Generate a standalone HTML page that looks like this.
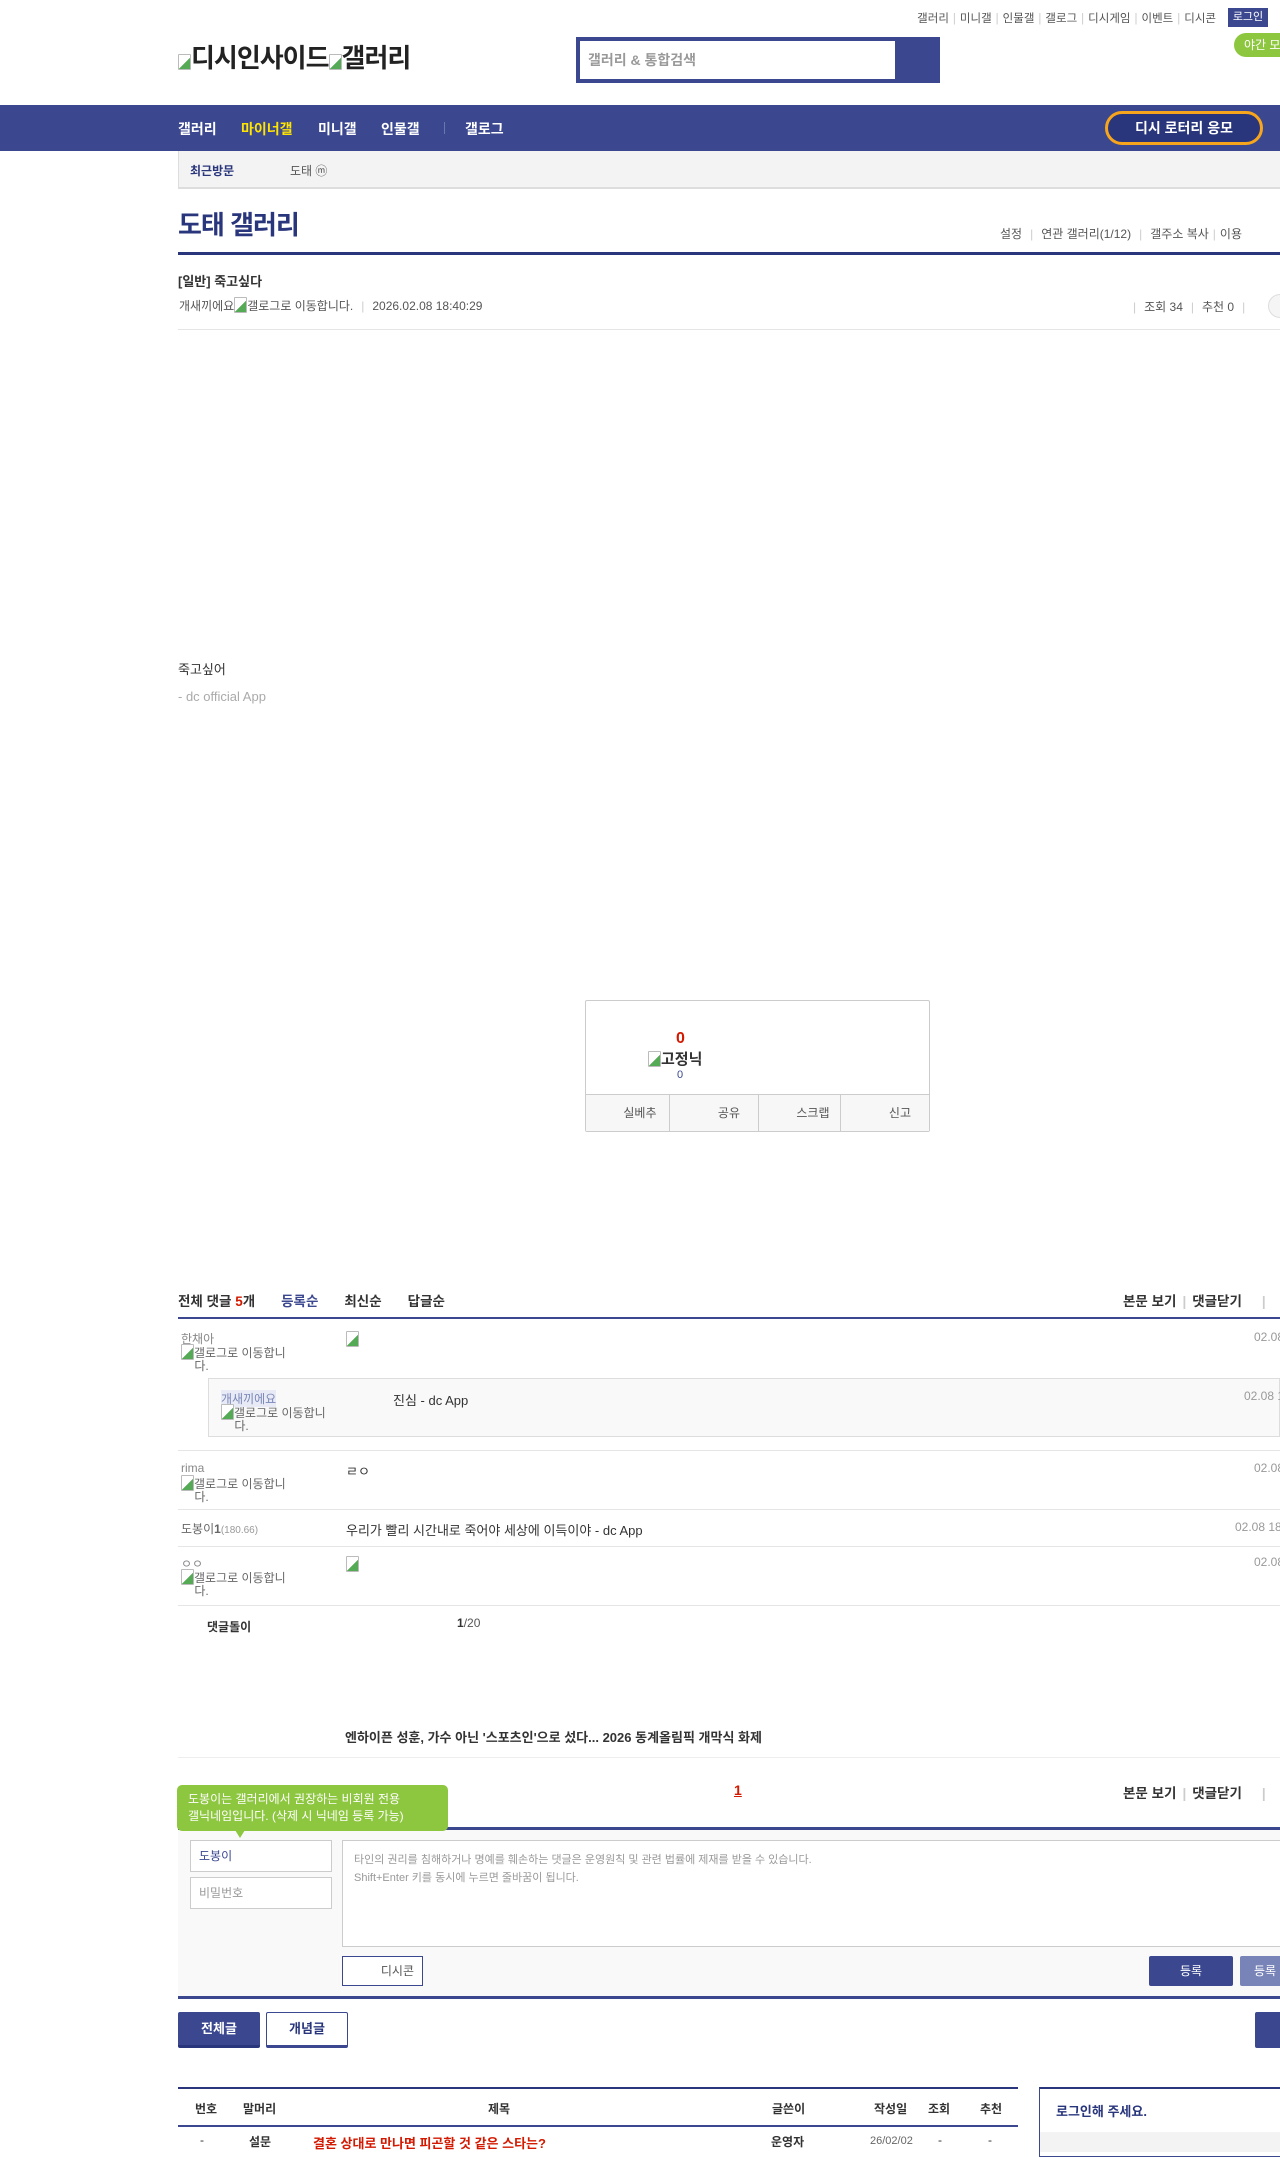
<!DOCTYPE html>
<html><head><meta charset="utf-8">
<style>
*{margin:0;padding:0;box-sizing:border-box}
body{width:1280px;height:2144px;overflow:hidden;position:relative;background:#fff;font-family:"Liberation Sans","Noto Sans CJK KR",sans-serif;color:#333;font-size:12px}
.a{position:absolute;white-space:nowrap}
.sep{color:#ccc;margin:0 4px}
.line{position:absolute;height:1px;background:#e5e5e5}
.img{display:inline-block;width:13px;height:16px;border:1px solid #bbb;border-radius:1px;vertical-align:-3px;background:linear-gradient(135deg,#fff 55%,#5a5 56%)}
.cm{font-size:12px;color:#888}
</style></head><body>
<div class="a" style="left:903px;top:10px;font-size:11.5px;color:#555;width:313px;text-align:right">갤러리<span class="sep">|</span>미니갤<span class="sep">|</span>인물갤<span class="sep">|</span>갤로그<span class="sep">|</span>디시게임<span class="sep">|</span>이벤트<span class="sep">|</span>디시콘</div>
<div class="a" style="left:1228px;top:8px;width:40px;height:19px;background:#3b4890;color:#fff;font-size:11px;text-align:center;line-height:19px">로그인</div>
<div class="a" style="left:1234px;top:33px;width:60px;height:24px;background:#8dc63f;border-radius:12px;color:#fff;font-size:12px;line-height:24px;padding-left:10px">야간 모드</div>
<div class="a" style="left:178px;top:38px;font-size:26px;font-weight:bold;color:#222;letter-spacing:-1px"><span class="img"></span>디시인사이드<span class="img"></span>갤러리</div>
<div class="a" style="left:576px;top:37px;width:364px;height:46px;background:#3b4890"></div>
<div class="a" style="left:580px;top:41px;width:315px;height:38px;background:#fff;color:#999;font-size:14px;font-weight:bold;line-height:38px;padding-left:8px">갤러리 &amp; 통합검색</div>
<div class="a" style="left:0;top:105px;width:1280px;height:46px;background:#3b4890"></div>
<div class="a" style="left:178px;top:119px;font-size:14px;font-weight:bold;color:#fff">갤러리</div>
<div class="a" style="left:241px;top:119px;font-size:14px;font-weight:bold;color:#ffe400">마이너갤</div>
<div class="a" style="left:318px;top:119px;font-size:14px;font-weight:bold;color:#fff">미니갤</div>
<div class="a" style="left:381px;top:119px;font-size:14px;font-weight:bold;color:#fff">인물갤</div>
<div class="a" style="left:444px;top:122px;width:1px;height:12px;background:#6a76b0"></div>
<div class="a" style="left:465px;top:119px;font-size:14px;font-weight:bold;color:#fff">갤로그</div>
<div class="a" style="left:1105px;top:111px;width:158px;height:34px;border:3px solid #f7a51c;border-radius:17px;background:#29367c;color:#fff;font-size:14px;font-weight:bold;text-align:center;line-height:28px">디시 로터리 응모</div>
<div class="a" style="left:178px;top:151px;width:1102px;height:38px;background:#f3f3f3;border-left:1px solid #ddd;border-bottom:2px solid #ddd"></div>
<div class="a" style="left:190px;top:162px;font-size:12px;font-weight:bold;color:#29367c">최근방문</div>
<div class="a" style="left:290px;top:162px;font-size:12px;color:#555">도태 ⓜ</div>
<div class="a" style="left:178px;top:205px;font-size:26px;font-weight:bold;color:#29367c;letter-spacing:-1px">도태 갤러리</div>
<div class="a" style="left:1000px;top:225px;font-size:12px;color:#555">설정<span class="sep" style="margin:0 8px">|</span>연관 갤러리(1/12)<span class="sep" style="margin:0 8px">|</span>갤주소 복사<span class="sep">|</span>이용</div>
<div class="a" style="left:178px;top:252px;width:1102px;height:3px;background:#29367c"></div>
<div class="a" style="left:178px;top:271px;font-size:13px;font-weight:bold;color:#333">[일반] 죽고싶다</div>
<div class="a" style="left:179px;top:297px;font-size:12px;color:#555">개새끼에요<span class="img"></span>갤로그로 이동합니다.<span class="sep" style="margin:0 8px">|</span>2026.02.08 18:40:29</div>
<div class="a" style="left:1133px;top:298px;font-size:12px;color:#555"><span class="sep" style="margin:0 8px 0 0">|</span>조회 34<span class="sep" style="margin:0 8px">|</span>추천 0<span class="sep" style="margin:0 8px">|</span></div>
<div class="a" style="left:1268px;top:294px;width:24px;height:24px;border:1px solid #ddd;border-radius:12px;background:#f5f5f5"></div>
<div class="line" style="left:178px;top:329px;width:1102px"></div>
<div class="a" style="left:178px;top:659px;font-size:13px;color:#333">죽고싶어</div>
<div class="a" style="left:178px;top:689px;font-size:13px;color:#aaa">- dc official App</div>
<div class="a" style="left:585px;top:1000px;width:345px;height:132px;border:1px solid #ccc;border-radius:2px"></div>
<div class="a" style="left:676px;top:1030px;font-size:16px;font-weight:bold;color:#d31900">0</div>
<div class="a" style="left:648px;top:1048px;font-size:15px;font-weight:bold;color:#333"><span class="img"></span>고정닉</div>
<div class="a" style="left:677px;top:1069px;font-size:11px;color:#3b4890">0</div>
<div class="a" style="left:586px;top:1094px;width:343px;height:37px;background:#f7f7f7;border-top:1px solid #ccc;display:flex">
<div style="flex:1;border-right:1px solid #ccc;text-align:right;padding-right:12px;line-height:36px;color:#555">실베추</div>
<div style="flex:1;border-right:1px solid #ccc;text-align:right;padding-right:18px;line-height:36px;color:#555">공유</div>
<div style="flex:1;border-right:1px solid #ccc;text-align:right;padding-right:10px;line-height:36px;color:#555">스크랩</div>
<div style="flex:1;text-align:right;padding-right:18px;line-height:36px;color:#555">신고</div></div>
<div class="a" style="left:178px;top:1290px;font-size:13.5px;font-weight:bold;color:#333">전체 댓글 <span style="color:#d31900">5</span>개<span style="color:#3b4890;margin-left:26px">등록순</span><span style="margin-left:26px">최신순</span><span style="margin-left:26px">답글순</span></div>
<div class="a" style="left:1123px;top:1290px;font-size:13.5px;font-weight:bold;color:#333">본문 보기<span class="sep" style="margin:0 6px">|</span>댓글닫기<span class="sep" style="margin:0 0 0 20px">|</span></div>
<div class="a" style="left:178px;top:1317px;width:1102px;height:2px;background:#3b4890"></div>
<div class="a cm" style="left:181px;top:1330px">한채아</div>
<div class="a cm" style="left:181px;top:1344px;line-height:12px;color:#666"><span class="img"></span>갤로그로 이동합니<br>&nbsp;&nbsp;&nbsp;&nbsp;다.</div>
<div class="a" style="left:346px;top:1331px"><span class="img"></span></div>
<div class="a cm" style="left:1254px;top:1330px;color:#999">02.08</div>
<div class="a" style="left:208px;top:1378px;width:1072px;height:59px;background:#f9f9f9;border:1px solid #ddd"></div>
<div class="a cm" style="left:221px;top:1390px;background:#e8ebf5;color:#7a86b8">개새끼에요</div>
<div class="a cm" style="left:221px;top:1404px;line-height:12px;color:#666"><span class="img"></span>갤로그로 이동합니<br>&nbsp;&nbsp;&nbsp;&nbsp;다.</div>
<div class="a" style="left:393px;top:1390px;font-size:13px;color:#333">진심 - dc App</div>
<div class="a cm" style="left:1244px;top:1389px;color:#999">02.08 1</div>
<div class="line" style="left:178px;top:1450px;width:1102px"></div>
<div class="a cm" style="left:181px;top:1461px">rima</div>
<div class="a cm" style="left:181px;top:1475px;line-height:12px;color:#666"><span class="img"></span>갤로그로 이동합니<br>&nbsp;&nbsp;&nbsp;&nbsp;다.</div>
<div class="a" style="left:346px;top:1461px;font-size:13px">ㄹㅇ</div>
<div class="a cm" style="left:1254px;top:1461px;color:#999">02.08</div>
<div class="line" style="left:178px;top:1509px;width:1102px"></div>
<div class="a cm" style="left:181px;top:1520px;color:#666">도봉이<b>1</b><span style="font-size:10px;color:#999">(180.66)</span></div>
<div class="a" style="left:346px;top:1520px;font-size:13px">우리가 빨리 시간내로 죽어야 세상에 이득이야 - dc App</div>
<div class="a cm" style="left:1235px;top:1520px;color:#999">02.08 18</div>
<div class="line" style="left:178px;top:1546px;width:1102px"></div>
<div class="a cm" style="left:181px;top:1555px">ㅇㅇ</div>
<div class="a cm" style="left:181px;top:1569px;line-height:12px;color:#666"><span class="img"></span>갤로그로 이동합니<br>&nbsp;&nbsp;&nbsp;&nbsp;다.</div>
<div class="a" style="left:346px;top:1556px"><span class="img"></span></div>
<div class="a cm" style="left:1254px;top:1555px;color:#999">02.08</div>
<div class="line" style="left:178px;top:1605px;width:1102px"></div>
<div class="a" style="left:207px;top:1618px;font-size:12px;font-weight:bold">댓글돌이</div>
<div class="a" style="left:457px;top:1616px;font-size:12px;color:#555"><b style="color:#333">1</b>/20</div>
<div class="a" style="left:345px;top:1727px;font-size:13px;font-weight:bold;color:#333">엔하이픈 성훈, 가수 아닌 '스포츠인'으로 섰다... 2026 동계올림픽 개막식 화제</div>
<div class="line" style="left:178px;top:1757px;width:1102px;background:#eee"></div>
<div class="a" style="left:734px;top:1782px;font-size:14px;font-weight:bold;color:#d31900;text-decoration:underline">1</div>
<div class="a" style="left:1123px;top:1782px;font-size:13.5px;font-weight:bold;color:#333">본문 보기<span class="sep" style="margin:0 6px">|</span>댓글닫기<span class="sep" style="margin:0 0 0 20px">|</span></div>
<div class="a" style="left:178px;top:1827px;width:1102px;height:3px;background:#3b4890"></div>
<div class="a" style="left:178px;top:1830px;width:1102px;height:168px;background:#f9f9f9"></div>
<div class="a" style="left:177px;top:1785px;width:271px;height:46px;background:#8dc63f;border-radius:5px;color:#fff;font-size:12px;line-height:17px;padding:6px 11px">도봉이는 갤러리에서 권장하는 비회원 전용<br>갤닉네임입니다. (삭제 시 닉네임 등록 가능)</div>
<div class="a" style="left:235px;top:1830px;width:0;height:0;border-left:5px solid transparent;border-right:5px solid transparent;border-top:8px solid #8dc63f"></div>
<div class="a" style="left:190px;top:1840px;width:142px;height:32px;background:#fff;border:1px solid #ccc;color:#3b4890;font-size:12px;line-height:30px;padding-left:8px">도봉이</div>
<div class="a" style="left:190px;top:1877px;width:142px;height:32px;background:#fff;border:1px solid #ccc;color:#999;font-size:12px;line-height:30px;padding-left:8px">비밀번호</div>
<div class="a" style="left:342px;top:1840px;width:950px;height:107px;background:#fff;border:1px solid #ccc;color:#999;font-size:11px;line-height:18px;padding:10px 11px">타인의 권리를 침해하거나 명예를 훼손하는 댓글은 운영원칙 및 관련 법률에 제재를 받을 수 있습니다.<br>Shift+Enter 키를 동시에 누르면 줄바꿈이 됩니다.</div>
<div class="a" style="left:342px;top:1956px;width:81px;height:30px;background:#fff;border:1px solid #3b4890;color:#555;font-size:12px;line-height:28px;text-align:right;padding-right:8px">디시콘</div>
<div class="a" style="left:1149px;top:1956px;width:84px;height:30px;background:#3b4890;border-radius:2px;color:#fff;font-size:12px;line-height:30px;text-align:center">등록</div>
<div class="a" style="left:1240px;top:1956px;width:60px;height:30px;background:#7884b8;border-radius:2px;color:#fff;font-size:12px;line-height:30px;padding-left:14px">등록</div>
<div class="a" style="left:178px;top:1996px;width:1102px;height:3px;background:#3b4890"></div>
<div class="a" style="left:178px;top:2012px;width:82px;height:36px;background:#3b4890;border-bottom:3px solid #29367c;border-radius:2px;color:#fff;font-size:13px;font-weight:bold;line-height:33px;text-align:center">전체글</div>
<div class="a" style="left:266px;top:2012px;width:82px;height:36px;background:#fff;border:1px solid #3b4890;border-bottom:3px solid #3b4890;border-radius:2px;color:#29367c;font-size:13px;font-weight:bold;line-height:32px;text-align:center">개념글</div>
<div class="a" style="left:1255px;top:2012px;width:40px;height:36px;background:#3b4890;border-radius:2px"></div>
<div class="a" style="left:178px;top:2087px;width:840px;height:2px;background:#29367c"></div>
<div class="a" style="left:195px;top:2100px;font-size:12px;font-weight:bold;color:#333">번호</div>
<div class="a" style="left:243px;top:2100px;font-size:12px;font-weight:bold;color:#333">말머리</div>
<div class="a" style="left:488px;top:2100px;font-size:12px;font-weight:bold;color:#333">제목</div>
<div class="a" style="left:772px;top:2100px;font-size:12px;font-weight:bold;color:#333">글쓴이</div>
<div class="a" style="left:874px;top:2100px;font-size:12px;font-weight:bold;color:#333">작성일</div>
<div class="a" style="left:928px;top:2100px;font-size:12px;font-weight:bold;color:#333">조회</div>
<div class="a" style="left:980px;top:2100px;font-size:12px;font-weight:bold;color:#333">추천</div>
<div class="a" style="left:178px;top:2125px;width:840px;height:2px;background:#3b4890"></div>
<div class="a" style="left:200px;top:2133px;font-size:12px">-</div>
<div class="a" style="left:249px;top:2133px;font-size:12px;font-weight:bold">설문</div>
<div class="a" style="left:313px;top:2133px;font-size:13px;font-weight:bold;color:#d31900">결혼 상대로 만나면 피곤할 것 같은 스타는?</div>
<div class="a" style="left:771px;top:2133px;font-size:12px;font-weight:bold">운영자</div>
<div class="a" style="left:870px;top:2135px;font-size:11px;color:#666">26/02/02</div>
<div class="a" style="left:938px;top:2133px;font-size:12px">-</div>
<div class="a" style="left:988px;top:2133px;font-size:12px">-</div>
<div class="a" style="left:1039px;top:2087px;width:250px;height:70px;border:1px solid #3b4890;border-top:2px solid #29367c"></div>
<div class="a" style="left:1040px;top:2132px;width:240px;height:20px;background:#f3f3f3"></div>
<div class="a" style="left:1056px;top:2101px;font-size:13px;font-weight:bold;color:#29367c">로그인해 주세요.</div>
</body></html>
